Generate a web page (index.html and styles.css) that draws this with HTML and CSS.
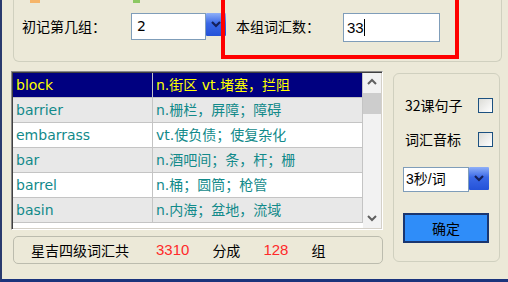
FILE: index.html
```html
<!DOCTYPE html>
<html lang="zh-CN">
<head>
    <meta charset="UTF-8">
    <title>星吉四级词汇</title>
    <link rel="stylesheet" href="styles.css">
</head>
<body>
    <!-- 上方分组设置 -->
    <div class="top-group">
        <div class="peek">
            <span class="peek-orange"></span>
            <span class="peek-green"></span>
        </div>
        <div class="controls">
            <span class="label-a">初记第几组：</span>
            <div class="combo combo-group">
                <span class="combo-field">2</span>
                <span class="combo-btn">
                    <svg width="20" height="23" viewBox="0 0 20 23"><path d="M6 9 L10 13 L14 9" fill="none" stroke="#15205a" stroke-width="2.2"/></svg>
                </span>
            </div>
            <span class="label-b">本组词汇数：</span>
            <div class="textbox">33<span class="caret"></span></div>
        </div>
    </div>

    <div class="highlight"></div>

    <div class="main">
        <div class="left-col">
            <div class="listbox">
                <div class="list-rows">
                    <div class="row selected"><div class="cell word">block</div><div class="cell meaning">n.街区 vt.堵塞，拦阻</div></div>
                    <div class="row gray"><div class="cell word">barrier</div><div class="cell meaning">n.栅栏，屏障；障碍</div></div>
                    <div class="row"><div class="cell word">embarrass</div><div class="cell meaning">vt.使负债；使复杂化</div></div>
                    <div class="row gray"><div class="cell word">bar</div><div class="cell meaning">n.酒吧间；条，杆；栅</div></div>
                    <div class="row"><div class="cell word">barrel</div><div class="cell meaning">n.桶；圆筒；枪管</div></div>
                    <div class="row gray"><div class="cell word">basin</div><div class="cell meaning">n.内海；盆地，流域</div></div>
                </div>
                <div class="scrollbar">
                    <div class="sb-arrow">
                        <svg width="18" height="20" viewBox="0 0 18 20"><path d="M5 11 L9 7 L13 11" fill="none" stroke="#606060" stroke-width="2"/></svg>
                    </div>
                    <div class="sb-thumb"></div>
                    <div class="sb-track"></div>
                    <div class="sb-arrow sb-down">
                        <svg width="18" height="16" viewBox="0 0 18 16"><path d="M5 6 L9 10 L13 6" fill="none" stroke="#606060" stroke-width="2"/></svg>
                    </div>
                </div>
            </div>
            <div class="status">
                <span class="st-text">星吉四级词汇共</span>
                <span class="st-num st-total">3310</span>
                <span class="st-text st-split">分成</span>
                <span class="st-num st-groups">128</span>
                <span class="st-text st-unit">组</span>
            </div>
        </div>

        <!-- 右侧选项 -->
        <div class="side-group">
            <div class="check-row">
                <span>32课句子</span>
                <span class="checkbox"></span>
            </div>
            <div class="check-row second">
                <span>词汇音标</span>
                <span class="checkbox"></span>
            </div>
            <div class="combo combo-speed">
                <span class="combo-field">3秒/词</span>
                <span class="combo-btn">
                    <svg width="20" height="23" viewBox="0 0 20 23"><path d="M6 9 L10 13 L14 9" fill="none" stroke="#15205a" stroke-width="2.2"/></svg>
                </span>
            </div>
            <button class="ok-button">确定</button>
        </div>
    </div>
</body>
</html>
```

FILE: styles.css
```css
body {
    margin: 0;
    width: 508px;
    height: 282px;
    box-sizing: border-box;
    overflow: hidden;
    position: relative;
    background-color: #ece9d8;
    border-left: 2px solid #2a3a6e;
    border-bottom: 3px solid #1b347c;
    font-family: "Noto Sans CJK SC", sans-serif;
    font-size: 14px;
    color: #000;
}

.top-group {
    margin-left: 11px;
    width: 489px;
    height: 62px;
    box-sizing: border-box;
    border: 1px solid #d0d0bf;
    border-top: none;
    border-radius: 0 0 6px 6px;
}

.peek {
    display: flex;
    height: 3px;
    overflow: hidden;
}

.peek-orange {
    margin-left: 16px;
    width: 10px;
    height: 3px;
    background-color: #f6b56a;
}

.peek-green {
    margin-left: 93px;
    width: 7px;
    height: 3px;
    background-color: #8cc862;
}

.controls {
    display: flex;
    align-items: flex-start;
    margin-top: 10px;
    padding-left: 8px;
}

.label-a,
.label-b {
    height: 27px;
    line-height: 27px;
}

.label-a {
    width: 109px;
}

.label-b {
    margin-left: 10px;
    width: 107px;
}

.combo {
    display: flex;
    align-items: flex-start;
}

.combo-field {
    height: 27px;
    box-sizing: border-box;
    border: 1px solid #7f9db9;
    background-color: #fff;
    padding-left: 5px;
    line-height: 25px;
    font-family: "DejaVu Sans", "Noto Sans CJK SC", sans-serif;
}

.combo-group .combo-field {
    width: 75px;
}

.combo-btn {
    display: block;
    width: 20px;
    height: 23px;
    background: linear-gradient(#8fb0f8, #3a68e6 45%, #2452d8);
    border-radius: 1px;
}

.combo-btn svg {
    display: block;
}

.textbox {
    display: flex;
    align-items: center;
    width: 97px;
    height: 29px;
    box-sizing: border-box;
    border: 1px solid #7f9db9;
    background-color: #fff;
    padding-left: 3px;
    font-family: "Liberation Sans", sans-serif;
    font-size: 15px;
}

.caret {
    display: block;
    width: 0;
    height: 17px;
    border-left: 1px solid #000;
}

.highlight {
    position: absolute;
    left: 219px;
    top: -10px;
    width: 238px;
    height: 69px;
    box-sizing: border-box;
    border: 4px solid #ff0000;
}

.main {
    display: flex;
    margin-top: 9px;
    margin-left: 9px;
}

.left-col {
    width: 372px;
}

.listbox {
    display: flex;
    height: 159px;
    box-sizing: border-box;
    border: 1px solid;
    border-color: #8a8a8a #ffffff #ffffff #8a8a8a;
    box-shadow: inset 1px 1px 0 #404040, inset -1px -1px 0 #d4d0c8;
    padding: 1px;
    background-color: #fff;
}

.list-rows {
    flex: 1;
}

.row {
    display: flex;
    height: 25px;
    box-sizing: border-box;
    border-bottom: 1px solid #c4c4c4;
    border-right: 1px solid #c4c4c4;
    background-color: #fff;
    color: #128a8a;
}

.row.gray {
    background-color: #e8e8e8;
}

.row.selected {
    background-color: #000080;
    color: #ffff00;
}

.cell {
    line-height: 24px;
    white-space: nowrap;
}

.word {
    width: 140px;
    box-sizing: border-box;
    border-right: 1px solid #c4c4c4;
    padding-left: 3px;
    font-family: "DejaVu Sans", sans-serif;
}

.meaning {
    padding-left: 3px;
    font-family: "DejaVu Sans", "Noto Sans CJK SC", sans-serif;
}

.scrollbar {
    display: flex;
    flex-direction: column;
    width: 18px;
    background-color: #f2f2f2;
}

.sb-arrow svg {
    display: block;
}

.sb-thumb {
    height: 21px;
    background-color: #cdcdcd;
}

.sb-track {
    flex: 1;
}

.sb-down {
    margin-bottom: 2px;
}

.status {
    display: flex;
    align-items: center;
    margin-top: 6px;
    margin-left: 2px;
    width: 370px;
    height: 28px;
    box-sizing: border-box;
    border: 1px solid #bcbcae;
    border-radius: 5px;
    padding-left: 17px;
    line-height: 20px;
}

.st-num {
    color: #ff2a2a;
    font-family: "Liberation Sans", sans-serif;
    font-size: 15px;
}

.st-total {
    margin-left: 27px;
}

.st-split {
    margin-left: 23px;
}

.st-groups {
    margin-left: 23px;
}

.st-unit {
    margin-left: 23px;
}

.side-group {
    margin-left: 10px;
    margin-top: 2px;
    width: 107px;
    height: 189px;
    box-sizing: border-box;
    border: 1px solid #d0d0bf;
    border-radius: 6px;
    padding: 22px 6px 0 9px;
}

.check-row {
    display: flex;
    justify-content: space-between;
    align-items: center;
    height: 18px;
    padding-left: 2px;
}

.check-row.second {
    margin-top: 16px;
}

.checkbox {
    display: block;
    width: 15px;
    height: 15px;
    box-sizing: border-box;
    border: 1px solid #1c5180;
    background: linear-gradient(135deg, #dcdcd7, #ffffff);
}

.combo-speed {
    margin-top: 19px;
}

.combo-speed .combo-field {
    width: 66px;
    height: 25px;
    line-height: 23px;
    padding-left: 2px;
    font-family: "Liberation Sans", "Noto Sans CJK SC", sans-serif;
}

.ok-button {
    display: block;
    margin-top: 21px;
    width: 86px;
    height: 30px;
    border: 2px solid #1a3670;
    background-color: #2f8df9;
    color: #000;
    font-family: "Noto Sans CJK SC", sans-serif;
    font-size: 14px;
    padding: 0;
    cursor: pointer;
}
```
